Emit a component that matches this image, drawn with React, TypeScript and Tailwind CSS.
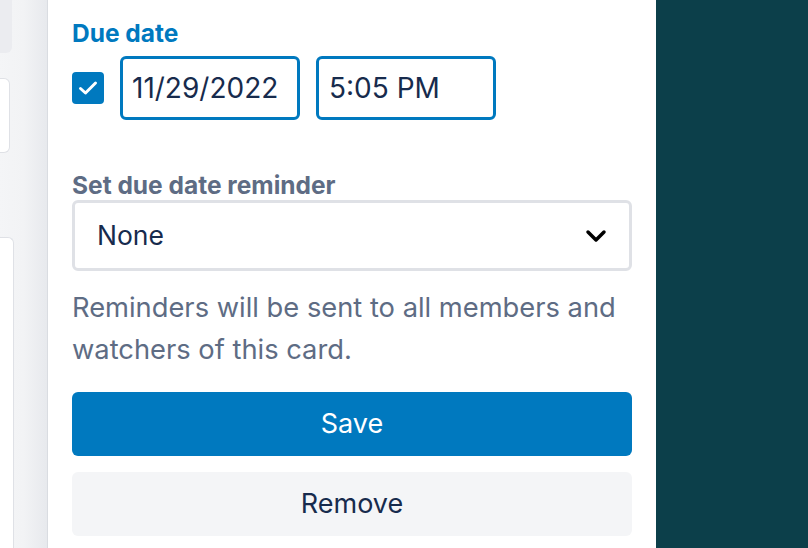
import React from "react";

const font = { fontFamily: "Inter, 'Noto Sans', sans-serif" };

export default function App() {
  return (
    <div className="flex h-[548px] w-[808px] overflow-hidden bg-white" style={font}>
      {/* board strip behind the popover */}
      <div className="flex w-[48px] shrink-0 flex-col border-r border-[#d9dce1] bg-gradient-to-r from-[#f4f5f7] via-[#f2f3f5] to-[#e7e9ed]">
        <div className="h-[53px] w-[12px] rounded-br-md bg-[#ebecf0]"></div>
        <div className="mt-[25px] h-[75px] w-[10px] rounded-r-md border border-l-0 border-[#dfe1e6] bg-white"></div>
        <div className="mt-[84px] w-[14px] flex-1 rounded-tr-md border border-l-0 border-b-0 border-[#dfe1e6] bg-white"></div>
      </div>

      {/* popover */}
      <div className="flex w-[608px] shrink-0 flex-col px-6 pt-[19px]">
        <label className="text-[24.5px] font-bold leading-[28px] text-[#0079bf]">Due date</label>
        <div className="mt-[9px] flex items-center gap-4">
          <div className="flex h-8 w-8 items-center justify-center rounded-[4px] bg-[#0079bf]">
            <svg width="32" height="32" viewBox="0 0 32 32" fill="none">
              <polyline points="8.5,16.5 13.5,21 23.5,11" stroke="white" strokeWidth="3" strokeLinecap="round" strokeLinejoin="round" />
            </svg>
          </div>
          <div className="flex h-16 w-[180px] items-center rounded-md border-[3px] border-[#0079bf] pl-[9px] text-[28px] text-[#172b4d]">
            11/29/2022
          </div>
          <div className="flex h-16 w-[180px] items-center rounded-md border-[3px] border-[#0079bf] pl-[10px] text-[28px] text-[#172b4d]">
            5:05 PM
          </div>
        </div>

        <label className="mt-[51px] text-[24.5px] font-bold leading-[28px] text-[#5e6c84]">Set due date reminder</label>
        <div className="mt-[1px] flex h-[71px] items-center justify-between rounded-md border-[3px] border-[#dfe1e6] pl-[22px] pr-[22px] text-[26.5px] text-[#172b4d]">
          <span>None</span>
          <svg width="22" height="14" viewBox="0 0 22 14" fill="none">
            <polyline points="3,3 11,11 19,3" stroke="#000" strokeWidth="3.5" strokeLinecap="round" strokeLinejoin="round" />
          </svg>
        </div>

        <p className="mt-[16px] text-[27.3px] leading-[42px] text-[#5e6c84]">
          Reminders will be sent to all members and watchers of this card.
        </p>

        <button className="mt-[21px] h-16 w-full rounded-md bg-[#0079bf] text-[27px] text-white">Save</button>
        <button className="mt-4 h-16 w-full rounded-md bg-[#f4f5f7] text-[27px] text-[#172b4d]">Remove</button>
      </div>

      {/* board background */}
      <div className="flex-1 bg-[#0c3f4a]"></div>
    </div>
  );
}
